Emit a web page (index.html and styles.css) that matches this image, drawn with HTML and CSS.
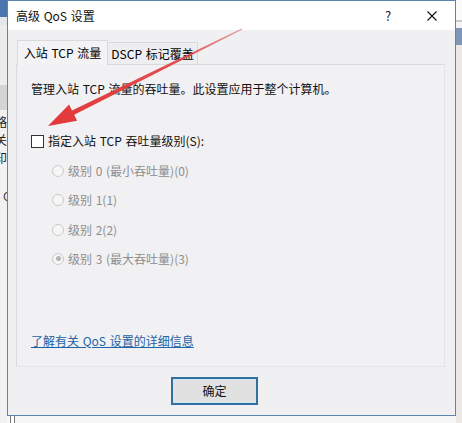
FILE: index.html
```html
<!DOCTYPE html>
<html lang="zh-CN">
<head>
<meta charset="utf-8">
<title>高级 QoS 设置</title>
<link rel="stylesheet" href="styles.css">
</head>
<body>
<div class="desktop">
  <div class="bg-left">
    <div class="bg-blue"></div>
    <div class="bg-strip"></div>
    <div class="bg-light"></div>
    <div class="bg-gray"></div>
    <div class="bg-glyphs">
      <span>略</span>
      <span>关</span>
      <span>印</span>
      <span class="bg-c">C</span>
    </div>
  </div>

  <div class="dialog">
    <div class="titlebar">
      <span class="title">高级 QoS 设置</span>
      <span class="help">?</span>
      <span class="close">
        <svg width="10" height="10" viewBox="0 0 10 10"><path d="M0.5 0.5 L9.5 9.5 M9.5 0.5 L0.5 9.5" stroke="#111" stroke-width="1.1" fill="none"/></svg>
      </span>
    </div>
    <div class="body">
      <div class="tabs">
        <div class="tab active">入站 TCP 流量</div>
        <div class="tab inactive">DSCP 标记覆盖</div>
      </div>
      <div class="panel">
        <p class="desc">管理入站 TCP 流量的吞吐量。此设置应用于整个计算机。</p>
        <div class="check"><span class="box"></span><span>指定入站 TCP 吞吐量级别(S):</span></div>
        <div class="radios">
          <div class="radio"><span class="dot"></span><span>级别 0 (最小吞吐量)(0)</span></div>
          <div class="radio"><span class="dot"></span><span>级别 1(1)</span></div>
          <div class="radio"><span class="dot"></span><span>级别 2(2)</span></div>
          <div class="radio"><span class="dot checked"></span><span>级别 3 (最大吞吐量)(3)</span></div>
        </div>
        <a class="link">了解有关 QoS 设置的详细信息</a>
      </div>
      <div class="footer">
        <button class="ok">确定</button>
      </div>
    </div>
  </div>

  <div class="bg-right">
    <div class="r-white"></div>
    <div class="r-line"></div>
    <div class="r-gap"></div>
    <div class="r-blue"></div>
  </div>

  <div class="bg-bottom"><span class="bottom-bar"></span></div>

  <svg class="arrow" width="462" height="423" viewBox="0 0 462 423">
    <defs>
      <linearGradient id="ag" x1="242" y1="29" x2="60" y2="118" gradientUnits="userSpaceOnUse">
        <stop offset="0" stop-color="#d9545a" stop-opacity="0.55"/>
        <stop offset="0.35" stop-color="#de3f42" stop-opacity="0.9"/>
        <stop offset="1" stop-color="#e3393a"/>
      </linearGradient>
    </defs>
    <polygon fill="url(#ag)" points="48,126 69.1,104.5 72.0,110.4 241.7,28.4 242.3,29.6 74.2,114.8 77.1,120.7"/>
  </svg>
</div>
</body>
</html>
```
FILE: styles.css
```css
* {
  box-sizing: border-box;
  margin: 0;
  padding: 0;
}

html, body {
  width: 462px;
  height: 423px;
  overflow: hidden;
}

body {
  font-family: "Noto Sans CJK SC", "Liberation Sans", sans-serif;
  font-size: 12px;
  word-spacing: 1px;
  color: #000;
  background: #f2f2f2;
}

.desktop {
  position: relative;
  display: grid;
  grid-template-columns: 7px 449px 6px;
  grid-template-rows: 416px 7px;
  width: 462px;
  height: 423px;
}

/* background window on the left */
.bg-left {
  grid-column: 1;
  grid-row: 1 / 3;
  background: #f1f1f1;
  overflow: hidden;
  display: flex;
  flex-direction: column;
}

.bg-blue {
  height: 17px;
  flex: none;
  background: #4a75ae;
}

.bg-strip {
  height: 8px;
  flex: none;
  background: #e3e6ea;
}

.bg-light {
  height: 60px;
  flex: none;
  background: #ececec;
}

.bg-gray {
  height: 25px;
  flex: none;
  background: #d4d4d4;
}

.bg-glyphs {
  display: flex;
  flex-direction: column;
  margin-left: -5px;
  margin-top: 3px;
  font-size: 12px;
  line-height: 18px;
  color: #222;
  white-space: nowrap;
}

.bg-c {
  margin-top: 20px;
  margin-left: 8px;
  color: #444;
}

/* dialog */
.dialog {
  grid-column: 2;
  grid-row: 1;
  display: flex;
  flex-direction: column;
  border: 1px solid #5b84b1;
  background: #f0eff1;
  box-shadow: 1px 1px 0 #b9d3ea;
}

.titlebar {
  height: 29px;
  flex: none;
  display: flex;
  align-items: center;
  padding-left: 8px;
  background: #fff;
}

.title {
  line-height: 16px;
  color: #111;
}

.help {
  margin-left: auto;
  width: 14px;
  text-align: center;
  font-size: 13px;
  line-height: 16px;
  color: #222;
}

.close {
  margin-left: 14px;
  width: 46px;
  height: 29px;
  display: flex;
  align-items: center;
  justify-content: center;
}

.body {
  flex: 1;
  padding: 10px 10px 0 8px;
  display: flex;
  flex-direction: column;
}

.tabs {
  display: flex;
  align-items: flex-end;
  height: 25px;
  margin-left: 1px;
  margin-bottom: -1px;
  position: relative;
  z-index: 1;
}

.tab {
  width: 91px;
  display: flex;
  align-items: center;
  justify-content: center;
  border: 1px solid #d9d9d9;
  border-bottom: none;
  line-height: 16px;
  white-space: nowrap;
}

.tab.active {
  height: 25px;
  background: #f3f2f4;
  padding-bottom: 1px;
}

.tab.inactive {
  height: 22px;
  margin-bottom: 1px;
  margin-left: -1px;
  background: #eeedef;
}

.panel {
  height: 303px;
  flex: none;
  border: 1px solid #dadada;
  border-right-color: #e4e4e4;
  border-bottom-color: #e4e4e4;
  background: #f1f0f2;
  padding: 16px 14px 17px 14px;
  display: flex;
  flex-direction: column;
}

.desc {
  line-height: 16px;
  color: #111;
}

.check {
  margin-top: 36px;
  height: 16px;
  display: flex;
  align-items: center;
  gap: 4px;
  line-height: 16px;
  color: #111;
}

.box {
  width: 13px;
  height: 13px;
  border: 1px solid #333;
  background: #fff;
  flex: none;
}

.radios {
  margin-top: 14px;
  padding-left: 21px;
  display: flex;
  flex-direction: column;
  gap: 13.33px;
}

.radio {
  height: 16px;
  display: flex;
  align-items: center;
  gap: 4px;
  line-height: 16px;
  color: #8e8e8e;
}

.dot {
  width: 12px;
  height: 12px;
  border-radius: 50%;
  border: 1px solid #cacaca;
  background: #f6f6f6;
  flex: none;
  display: flex;
  align-items: center;
  justify-content: center;
}

.dot.checked::after {
  content: "";
  width: 5px;
  height: 5px;
  border-radius: 50%;
  background: #b4b4b4;
}

.link {
  margin-top: auto;
  align-self: flex-start;
  line-height: 16px;
  color: #1d63a6;
  text-decoration: underline;
}

.footer {
  padding: 10px 0 0 155px;
}

.ok {
  width: 87px;
  height: 28px;
  border: 2px solid #31709f;
  background: #e1e1e1;
  box-shadow: inset 0 0 0 1px #cfe6f6;
  font-family: "Noto Sans CJK SC", "Liberation Sans", sans-serif;
  font-size: 12px;
  line-height: 16px;
  color: #111;
}

/* background on the right */
.bg-right {
  grid-column: 3;
  grid-row: 1 / 3;
  background: #ece8e5;
  display: flex;
  flex-direction: column;
}

.r-white {
  height: 20px;
  background: #fafafa;
}

.r-line {
  height: 2px;
  background: #c9c9c9;
}

.r-gap {
  height: 6px;
  background: #f4f4f4;
}

.r-blue {
  height: 17px;
  background: #7f96b8;
}

.bg-bottom {
  grid-column: 2;
  grid-row: 2;
  background: #f7f7f7;
  padding-left: 3px;
}

.bottom-bar {
  display: block;
  width: 5px;
  height: 7px;
  border-left: 1px solid #777;
  border-right: 1px solid #777;
  background: #fdfdfd;
}

.arrow {
  position: absolute;
  left: 0;
  top: 0;
  pointer-events: none;
  z-index: 5;
}
```
